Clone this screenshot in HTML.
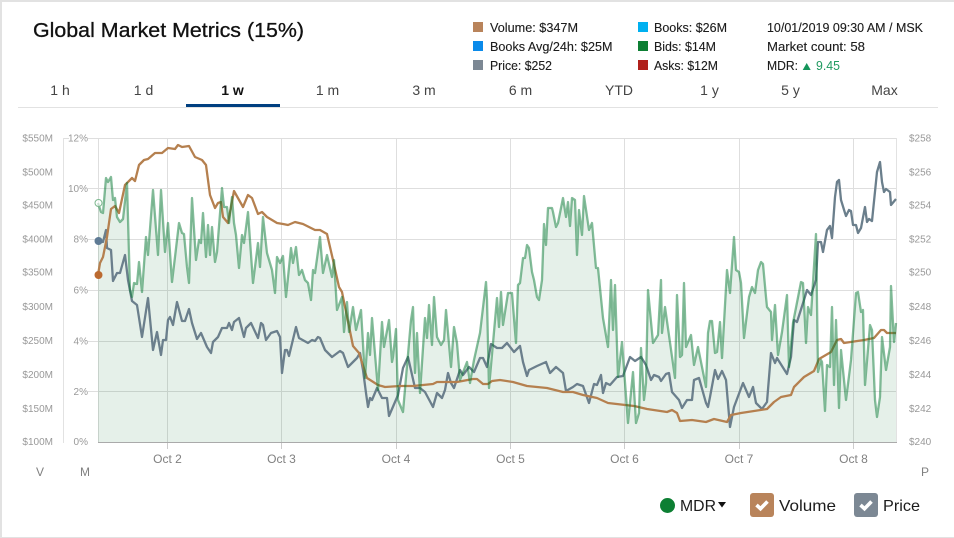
<!DOCTYPE html>
<html><head><meta charset="utf-8"><style>
html,body{margin:0;padding:0;background:#fff;width:954px;height:538px;overflow:hidden}
svg{display:block;font-family:"Liberation Sans",sans-serif}
.l{font-size:12.5px;fill:#1c1c1c;stroke:#1c1c1c;stroke-width:.12px}
.t{font-size:14px;fill:#444;text-anchor:middle}
.a{font-size:10px;fill:#999}
.d{font-size:12px;fill:#808080;text-anchor:middle}
.b{font-size:16px;fill:#1c1c1c}
</style></head><body>
<svg width="954" height="538" viewBox="0 0 954 538" xmlns="http://www.w3.org/2000/svg">
<rect x="0" y="0" width="954" height="2" fill="#e2e2e2"/>
<rect x="0" y="0" width="2" height="538" fill="#e2e2e2"/>
<rect x="0" y="537" width="954" height="1" fill="#e2e2e2"/>

<text x="33" y="37" font-size="20.5" fill="#111" stroke="#111" stroke-width=".3" textLength="271" lengthAdjust="spacingAndGlyphs">Global Market Metrics (15%)</text>

<rect x="473" y="22" width="10" height="10" fill="#b9845b"/>
<rect x="473" y="41" width="10" height="10" fill="#0a8aea"/>
<rect x="473" y="60" width="10" height="10" fill="#7c8894"/>
<rect x="638" y="22" width="10" height="10" fill="#00b0f0"/>
<rect x="638" y="41" width="10" height="10" fill="#0d7f33"/>
<rect x="638" y="60" width="10" height="10" fill="#b0201b"/>
<text class="l" x="490" y="32" textLength="88" lengthAdjust="spacingAndGlyphs">Volume: $347M</text>
<text class="l" x="490" y="51" textLength="122.5" lengthAdjust="spacingAndGlyphs">Books Avg/24h: $25M</text>
<text class="l" x="490" y="70" textLength="62" lengthAdjust="spacingAndGlyphs">Price: $252</text>
<text class="l" x="654" y="32" textLength="73" lengthAdjust="spacingAndGlyphs">Books: $26M</text>
<text class="l" x="654" y="51" textLength="62" lengthAdjust="spacingAndGlyphs">Bids: $14M</text>
<text class="l" x="654" y="70" textLength="64" lengthAdjust="spacingAndGlyphs">Asks: $12M</text>
<text class="l" x="767" y="32" textLength="156" lengthAdjust="spacingAndGlyphs">10/01/2019 09:30 AM / MSK</text>
<text class="l" x="767" y="51" textLength="98" lengthAdjust="spacingAndGlyphs">Market count: 58</text>
<text class="l" x="767" y="70" textLength="31" lengthAdjust="spacingAndGlyphs">MDR:</text>
<polygon points="802.7,70 810.7,70 806.7,63" fill="#14955a"/>
<text x="816" y="70" font-size="12.5" textLength="24" lengthAdjust="spacingAndGlyphs" fill="#1f9a60">9.45</text>

<text class="t" x="60" y="95">1 h</text>
<text class="t" x="143.5" y="95">1 d</text>
<text class="t" x="232.5" y="95" style="font-weight:700;fill:#111">1 w</text>
<text class="t" x="327.5" y="95">1 m</text>
<text class="t" x="424" y="95">3 m</text>
<text class="t" x="520.5" y="95">6 m</text>
<text class="t" x="619" y="95">YTD</text>
<text class="t" x="709.5" y="95">1 y</text>
<text class="t" x="790.5" y="95">5 y</text>
<text class="t" x="884.5" y="95">Max</text>
<rect x="18" y="107" width="920" height="1" fill="#e2e2e2"/>
<rect x="186" y="104" width="94" height="3" fill="#003f80"/>

<g stroke="#dedede" stroke-width="1" fill="none">
<path d="M63 138.5H69M88 138.5H896M88 188.5H896M88 239.5H896M88 290.5H896M88 341.5H896M88 391.5H896"/>
<path d="M98.5 138V442M167.5 138V442M281.5 138V442M396.5 138V442M510.5 138V442M624.5 138V442M739.5 138V442M853.5 138V442"/>
<path d="M63.5 138V443M896.5 138V442" stroke="#e2e2e2"/>
</g>
<path d="M98 442.5H897" stroke="#aaaaaa" stroke-width="1"/>
<path d="M167.5 443V449M281.5 443V449M396.5 443V449M510.5 443V449M624.5 443V449M739.5 443V449M853.5 443V449" stroke="#cccccc"/>

<g>
<text class="a" x="53" y="141.5" text-anchor="end">$550M</text>
<text class="a" x="53" y="175.5" text-anchor="end">$500M</text>
<text class="a" x="53" y="208.5" text-anchor="end">$450M</text>
<text class="a" x="53" y="242.5" text-anchor="end">$400M</text>
<text class="a" x="53" y="275.5" text-anchor="end">$350M</text>
<text class="a" x="53" y="310" text-anchor="end">$300M</text>
<text class="a" x="53" y="344" text-anchor="end">$250M</text>
<text class="a" x="53" y="378" text-anchor="end">$200M</text>
<text class="a" x="53" y="412" text-anchor="end">$150M</text>
<text class="a" x="53" y="445" text-anchor="end">$100M</text>
<text class="a" x="88" y="141.5" text-anchor="end">12%</text>
<text class="a" x="88" y="192" text-anchor="end">10%</text>
<text class="a" x="88" y="242.5" text-anchor="end">8%</text>
<text class="a" x="88" y="293.5" text-anchor="end">6%</text>
<text class="a" x="88" y="344.5" text-anchor="end">4%</text>
<text class="a" x="88" y="395" text-anchor="end">2%</text>
<text class="a" x="88" y="445" text-anchor="end">0%</text>
<text class="a" x="909" y="141.5">$258</text>
<text class="a" x="909" y="175.5">$256</text>
<text class="a" x="909" y="208.5">$254</text>
<text class="a" x="909" y="242.5">$252</text>
<text class="a" x="909" y="275.5">$250</text>
<text class="a" x="909" y="310">$248</text>
<text class="a" x="909" y="344">$246</text>
<text class="a" x="909" y="378">$244</text>
<text class="a" x="909" y="412">$242</text>
<text class="a" x="909" y="445">$240</text>
</g>
<text class="d" x="167.5" y="463">Oct 2</text>
<text class="d" x="281.5" y="463">Oct 3</text>
<text class="d" x="396" y="463">Oct 4</text>
<text class="d" x="510.5" y="463">Oct 5</text>
<text class="d" x="624.5" y="463">Oct 6</text>
<text class="d" x="739" y="463">Oct 7</text>
<text class="d" x="853.5" y="463">Oct 8</text>
<text class="d" x="40" y="476">V</text>
<text class="d" x="85" y="476">M</text>
<text class="d" x="925" y="476">P</text>

<polygon fill="#0a6e32" fill-opacity=".105" points="98,442 98,203 101,212 103,213 106,178 108,182 111,177 113,200 115,198 117,217 120,222 123,219 127,183 130,290 132,297 134,283 137,284 139,262 142,292 146,237 148,255 153,190 158,255 161,190 165,252 168,223 172,282 175,257 179,223 182,233 184,234 187,267 189,283 192,198 196,260 199,240 201,243 203,213 206,257 208,225 210,255 212,227 215,262 217,252 222,188 224,207 227,207 229,223 232,197 234,223 236,235 239,268 242,235 244,243 248,212 253,283 258,243 260,267 263,217 267,253 272,270 275,293 277,257 280,263 283,256 286,297 291,248 293,263 296,247 299,275 302,270 305,280 308,283 311,300 313,270 315,273 320,237 323,273 327,255 332,277 334,260 337,310 342,297 344,332 347,302 349,332 353,307 356,330 361,310 365,378 368,333 370,355 372,318 378,390 382,322 384,347 389,320 392,362 393,357 396,329 398,400 403,412 411,320 413,307 415,373 417,333 420,393 425,318 427,338 429,305 432,345 434,297 437,337 441,345 444,340 446,310 451,367 454,327 457,343 460,380 467,362 470,383 474,360 480,333 486,282 487,300 489,388 497,298 499,327 501,292 503,325 508,293 512,293 516,343 518,285 520,283 523,258 525,258 527,245 529,248 532,272 534,280 537,297 539,300 542,280 544,224 546,245 548,208 552,208 553,212 556,227 558,223 563,198 566,217 568,202 570,226 572,198 575,200 577,255 579,210 582,235 584,196 589,230 592,223 596,268 598,268 603,318 608,347 611,280 613,330 615,285 618,377 622,342 628,423 633,372 636,423 639,413 641,348 644,400 646,383 648,290 653,343 658,335 661,280 662,333 665,307 675,378 677,295 680,357 682,355 684,283 686,347 691,335 694,365 698,347 706,387 708,333 710,321 712,321 715,353 717,352 720,322 722,358 727,270 730,293 734,237 736,270 739,272 741,283 744,338 749,297 752,287 755,293 758,270 761,262 763,264 766,297 767,307 771,312 772,340 775,305 778,355 782,332 787,295 789,367 793,323 801,282 803,283 806,343 808,307 811,315 816,234 818,372 821,360 822,362 825,411 827,365 830,367 832,307 834,385 836,320 839,408 841,350 846,400 851,360 856,293 858,292 861,312 863,310 865,385 870,325 872,330 875,400 877,417 880,397 882,337 886,370 890,347 891,286 894,342 896,323 896,442"/>

<polyline fill="none" stroke="#6b7f8c" stroke-width="2.3" stroke-linejoin="round" points="98,241 103,242 106,230 107,248 111,250 113,281 117,273 120,273 125,255 128,280 132,301 137,305 142,337 148,298 153,350 157,332 161,355 163,340 166,340 168,320 170,317 173,325 177,302 182,321 185,321 189,309 192,323 197,339 201,333 207,347 211,353 213,342 218,337 222,328 227,328 229,323 232,330 234,322 239,318 244,337 246,328 251,323 258,338 261,323 263,325 266,340 271,333 277,331 280,337 282,373 285,350 287,350 289,356 296,327 299,338 308,343 312,340 315,341 318,337 320,338 325,350 332,357 340,351 343,353 348,367 357,358 360,353 363,370 366,393 368,407 370,398 372,400 377,388 382,398 387,398 389,416 398,395 403,368 408,357 415,388 420,388 425,392 433,407 437,393 442,398 445,390 448,373 451,383 454,388 460,370 463,375 469,367 474,372 480,358 483,358 487,367 491,344 497,348 502,348 507,343 514,352 520,346 523,362 527,376 529,370 537,366 546,362 550,373 556,367 563,373 566,391 573,387 577,384 583,386 589,403 594,384 597,385 601,375 603,393 606,383 610,385 617,377 623,376 630,357 635,361 641,357 646,365 651,380 654,375 659,377 661,381 666,374 669,373 672,392 679,400 682,408 687,400 692,400 694,380 699,378 706,403 708,407 710,397 715,370 718,379 722,371 726,380 730,427 734,407 743,383 749,397 753,387 756,403 762,409 767,402 771,353 775,363 777,358 787,374 791,357 794,320 797,322 804,300 807,290 811,295 816,280 818,242 821,242 823,252 827,230 830,226 832,238 835,197 837,182 839,180 841,200 845,213 846,216 849,210 851,211 853,225 856,225 858,233 861,228 865,207 867,222 869,219 872,221 877,172 880,162 882,182 884,192 886,189 890,192 891,205 896,199"/>

<polyline fill="none" stroke="#b5804f" stroke-width="2.3" stroke-linejoin="round" points="98,275 100,263 103,257 107,237 111,209 115,206 119,213 125,185 132,178 135,181 139,165 144,160 148,159 155,153 162,153 168,148 175,149 178,145 182,147 189,146 195,157 202,160 206,165 210,195 215,208 218,203 221,202 223,217 228,223 234,191 243,207 248,195 252,198 258,214 262,212 267,217 277,223 283,224 288,225 295,222 303,224 315,230 320,230 327,234 333,260 339,287 342,292 353,346 359,353 367,378 378,385 385,387 400,386 413,386 433,384 437,382 457,382 473,379 477,379 483,384 488,384 492,381 500,380 513,382 527,386 547,388 563,392 573,392 583,395 597,398 608,403 634,406 647,409 667,412 672,410 677,413 680,421 692,420 706,422 714,419 727,422 731,415 741,413 767,409 774,402 781,397 791,395 794,387 804,377 814,371 819,359 831,352 837,340 841,339 844,343 864,340 874,338 881,330 884,330 887,333 896,333"/>

<polyline fill="none" stroke="#0a7a35" stroke-opacity=".5" stroke-width="2.3" stroke-linejoin="round" points="98,203 101,212 103,213 106,178 108,182 111,177 113,200 115,198 117,217 120,222 123,219 127,183 130,290 132,297 134,283 137,284 139,262 142,292 146,237 148,255 153,190 158,255 161,190 165,252 168,223 172,282 175,257 179,223 182,233 184,234 187,267 189,283 192,198 196,260 199,240 201,243 203,213 206,257 208,225 210,255 212,227 215,262 217,252 222,188 224,207 227,207 229,223 232,197 234,223 236,235 239,268 242,235 244,243 248,212 253,283 258,243 260,267 263,217 267,253 272,270 275,293 277,257 280,263 283,256 286,297 291,248 293,263 296,247 299,275 302,270 305,280 308,283 311,300 313,270 315,273 320,237 323,273 327,255 332,277 334,260 337,310 342,297 344,332 347,302 349,332 353,307 356,330 361,310 365,378 368,333 370,355 372,318 378,390 382,322 384,347 389,320 392,362 393,357 396,329 398,400 403,412 411,320 413,307 415,373 417,333 420,393 425,318 427,338 429,305 432,345 434,297 437,337 441,345 444,340 446,310 451,367 454,327 457,343 460,380 467,362 470,383 474,360 480,333 486,282 487,300 489,388 497,298 499,327 501,292 503,325 508,293 512,293 516,343 518,285 520,283 523,258 525,258 527,245 529,248 532,272 534,280 537,297 539,300 542,280 544,224 546,245 548,208 552,208 553,212 556,227 558,223 563,198 566,217 568,202 570,226 572,198 575,200 577,255 579,210 582,235 584,196 589,230 592,223 596,268 598,268 603,318 608,347 611,280 613,330 615,285 618,377 622,342 628,423 633,372 636,423 639,413 641,348 644,400 646,383 648,290 653,343 658,335 661,280 662,333 665,307 675,378 677,295 680,357 682,355 684,283 686,347 691,335 694,365 698,347 706,387 708,333 710,321 712,321 715,353 717,352 720,322 722,358 727,270 730,293 734,237 736,270 739,272 741,283 744,338 749,297 752,287 755,293 758,270 761,262 763,264 766,297 767,307 771,312 772,340 775,305 778,355 782,332 787,295 789,367 793,323 801,282 803,283 806,343 808,307 811,315 816,234 818,372 821,360 822,362 825,411 827,365 830,367 832,307 834,385 836,320 839,408 841,350 846,400 851,360 856,293 858,292 861,312 863,310 865,385 870,325 872,330 875,400 877,417 880,397 882,337 886,370 890,347 891,286 894,342 896,323"/>

<circle cx="98.5" cy="203" r="3.5" fill="#fff" fill-opacity=".6" stroke="#7db88f" stroke-width="1"/>
<circle cx="98.5" cy="241" r="4" fill="#5e7a94"/>
<circle cx="98.5" cy="275" r="4" fill="#bb6a30"/>

<circle cx="667.5" cy="505.5" r="7.5" fill="#0d7f33"/>
<text class="b" x="680" y="511" textLength="36" lengthAdjust="spacingAndGlyphs">MDR</text>
<polygon points="718,502 726,502 722,507.5" fill="#111"/>
<rect x="750" y="493" width="24" height="24" rx="3" fill="#b9845b"/>
<path d="M756.5 505L760.5 508.7L767.5 501.5" fill="none" stroke="#fff" stroke-width="3.6"/>
<text class="b" x="779" y="511" textLength="57" lengthAdjust="spacingAndGlyphs">Volume</text>
<rect x="854" y="493" width="24" height="24" rx="3" fill="#7c8894"/>
<path d="M860.5 505L864.5 508.7L871.5 501.5" fill="none" stroke="#fff" stroke-width="3.6"/>
<text class="b" x="883" y="511" textLength="37" lengthAdjust="spacingAndGlyphs">Price</text>
</svg>
</body></html>
